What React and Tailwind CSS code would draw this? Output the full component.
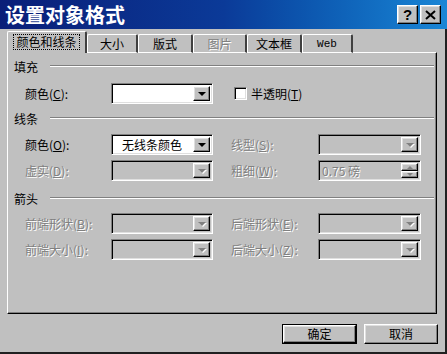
const raised = 'border border-white border-r-black border-b-black shadow-[inset_-1px_-1px_0_#808080,inset_1px_1px_0_#dfdfdf]'
const sunken = 'border border-[#808080] border-r-white border-b-white shadow-[inset_1px_1px_0_#000,inset_-1px_-1px_0_#dfdfdf]'
const dim = 'text-[#808080] [text-shadow:1px_1px_0_#fff]'

function Arrow({ disabled, up }) {
  const color = disabled ? 'border-t-[#808080]' : 'border-t-black'
  const colorUp = disabled ? 'border-b-[#808080]' : 'border-b-black'
  return up ? (
    <span className={`block w-0 h-0 border-x-[3px] border-x-transparent border-b-[3px] ${colorUp}`} />
  ) : (
    <span className={`block w-0 h-0 border-x-[4px] border-x-transparent border-t-[4px] ${color} ${disabled ? 'drop-shadow-[1px_1px_0_#fff]' : ''}`} />
  )
}

function Combo({ value, white, disabled, wide }) {
  return (
    <div className={`${sunken} ${wide ? 'w-[103px]' : 'w-[102px]'} h-[21px] flex p-[2px] ${white ? 'bg-white' : 'bg-[#c0c0c0]'}`}>
      <div className="flex-1 pl-[8px] text-[12px] leading-[15px] text-black">{value}</div>
      <div className={`${raised} w-[17px] h-[15px] flex items-center justify-center bg-[#c0c0c0]`}>
        <Arrow disabled={disabled} />
      </div>
    </div>
  )
}

function Spin({ value }) {
  return (
    <div className={`${sunken} w-[103px] h-[21px] flex p-[2px] bg-[#c0c0c0]`}>
      <div className={`flex-1 pl-[1px] text-[12px] leading-[15px] ${dim}`}>{value}</div>
      <div className="w-[17px] flex flex-col">
        <div className={`${raised} h-[8px] flex items-center justify-center bg-[#c0c0c0]`}><Arrow disabled up /></div>
        <div className={`${raised} h-[7px] flex items-center justify-center bg-[#c0c0c0]`}>
          <span className="block w-0 h-0 border-x-[3px] border-x-transparent border-t-[3px] border-t-[#808080]" />
        </div>
      </div>
    </div>
  )
}

function Label({ children, disabled, k, w = 'w-[86px]' }) {
  const [head, tail] = children
  return (
    <div className={`${w} text-[12px] leading-[21px] ${disabled ? dim : 'text-black'}`}>
      {head}(<span className="underline">{k}</span>){tail}
    </div>
  )
}

function Section({ title, className }) {
  return (
    <div className={`flex items-center h-[14px] pl-[6px] pr-[2px] ${className}`}>
      <span className="text-[12px] leading-[14px] text-black w-[36px]">{title}</span>
      <div className="flex-1 h-[2px] border-t border-t-[#808080] border-b border-b-white mb-[3px]" />
    </div>
  )
}

export default function App() {
  const tabs = [
    { t: '大小', w: 'w-[51px]' },
    { t: '版式', w: 'w-[55px]' },
    { t: '图片', w: 'w-[54px]', off: true },
    { t: '文本框', w: 'w-[55px]' },
    { t: 'Web', w: 'w-[51px]', mono: true },
  ]
  return (
    <div className="w-[447px] h-[354px] bg-[#c0c0c0] flex flex-col overflow-hidden font-['SimSun','Noto_Sans_CJK_SC',sans-serif]">
      <div className="h-[29px] flex items-center bg-linear-to-r from-[#0a1e78] via-[#0b3a98] to-[#1a86d6] pl-[5px] pr-[6px]">
        <span className="text-white text-[20px] font-bold leading-none tracking-[0px]">设置对象格式</span>
        <div className="ml-auto flex gap-[2px]">
          <div className={`${raised} w-[21px] h-[19px] bg-[#c0c0c0] flex items-center justify-center text-[15px] font-bold leading-none font-['Liberation_Sans',sans-serif]`}>?</div>
          <div className={`${raised} w-[21px] h-[19px] bg-[#c0c0c0] flex items-center justify-center`}>
            <svg width="11" height="10" viewBox="0 0 11 10"><path d="M1 1 L10 9 M10 1 L1 9" stroke="#000" strokeWidth="2" /></svg>
          </div>
        </div>
      </div>

      <div className="flex-1 flex flex-col border-r-2 border-b-2 border-[#202020]">
        <div className="ml-[7px] mt-[2px] h-[22px] flex items-end relative z-10 -mb-[1px]">
          <div className="w-[80px] h-[22px] bg-[#c0c0c0] border-t border-l border-white border-r-2 border-r-[#404040] rounded-t-[2px] flex items-start justify-center pt-[3px]">
            <span className="text-[12px] leading-[14px] px-[2px] outline outline-1 outline-dotted outline-black">颜色和线条</span>
          </div>
          {tabs.map((tb) => (
            <div key={tb.t} className={`${tb.w} h-[19px] border-t border-l border-white border-r-2 border-r-[#404040] border-b border-b-white rounded-t-[2px] flex items-center justify-center`}>
              <span className={`${tb.mono ? "font-['Liberation_Mono',monospace] text-[11px]" : 'text-[12px]'} leading-[14px] ${tb.off ? dim : 'text-black'}`}>{tb.t}</span>
            </div>
          ))}
        </div>

        <div className="ml-[7px] w-[430px] h-[262px] border border-white border-r-black border-b-black shadow-[inset_-1px_-1px_0_#808080] flex flex-col">
          <Section title="填充" className="mt-[7px]" />
          <div className="flex items-center mt-[9px] pl-[17px]">
            <Label k="C">{['颜色', ':']}</Label>
            <Combo white />
            <div className={`${sunken} ml-[21px] w-[13px] h-[13px] bg-white`} />
            <span className="ml-[4px] text-[12px] text-black">半透明(<span className="underline">T</span>)</span>
          </div>

          <Section title="线条" className="mt-[8px]" />
          <div className="flex items-center mt-[8px] pl-[17px]">
            <Label k="O">{['颜色', ':']}</Label>
            <Combo white value="无线条颜色" />
            <div className="ml-[18px]"><Label k="S" disabled w="w-[87px]">{['线型', ':']}</Label></div>
            <Combo disabled wide />
          </div>
          <div className="flex items-center mt-[5px] pl-[17px]">
            <Label k="D" disabled>{['虚实', ':']}</Label>
            <Combo disabled />
            <div className="ml-[18px]"><Label k="W" disabled w="w-[87px]">{['粗细', ':']}</Label></div>
            <Spin value="0.75 磅" />
          </div>

          <Section title="箭头" className="mt-[11px]" />
          <div className="flex items-center mt-[7px] pl-[17px]">
            <Label k="B" disabled>{['前端形状', ':']}</Label>
            <Combo disabled />
            <div className="ml-[18px]"><Label k="E" disabled w="w-[87px]">{['后端形状', ':']}</Label></div>
            <Combo disabled wide />
          </div>
          <div className="flex items-center mt-[5px] pl-[17px]">
            <Label k="I" disabled>{['前端大小', ':']}</Label>
            <Combo disabled />
            <div className="ml-[18px]"><Label k="Z" disabled w="w-[87px]">{['后端大小', ':']}</Label></div>
            <Combo disabled wide />
          </div>
        </div>

        <div className="flex justify-end gap-[7px] mt-[10px] pr-[7px]">
          <div className="w-[75px] h-[20px] border border-black">
            <div className={`${raised} h-full flex items-center justify-center text-[12px] text-black`}>确定</div>
          </div>
          <div className={`${raised} w-[74px] h-[20px] flex items-center justify-center text-[12px] text-black`}>取消</div>
        </div>
      </div>
    </div>
  )
}
